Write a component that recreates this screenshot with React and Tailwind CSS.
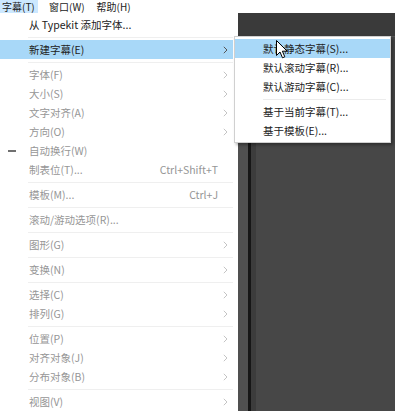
const font = { fontFamily: '"Noto Sans CJK SC", "Noto Sans", sans-serif' };

const items = [
  { label: "从 Typekit 添加字体...", on: true },
  { sep: true },
  { label: "新建字幕(E)", on: true, sub: true, hl: true },
  { sep: true },
  { label: "字体(F)", sub: true },
  { label: "大小(S)", sub: true },
  { label: "文字对齐(A)", sub: true },
  { label: "方向(O)", sub: true },
  { label: "自动换行(W)", dash: true },
  { label: "制表位(T)...", key: "Ctrl+Shift+T" },
  { sep: true },
  { label: "模板(M)...", key: "Ctrl+J" },
  { sep: true },
  { label: "滚动/游动选项(R)..." },
  { sep: true },
  { label: "图形(G)", sub: true },
  { sep: true },
  { label: "变换(N)", sub: true },
  { sep: true },
  { label: "选择(C)", sub: true },
  { label: "排列(G)", sub: true },
  { sep: true },
  { label: "位置(P)", sub: true },
  { label: "对齐对象(J)", sub: true },
  { label: "分布对象(B)", sub: true },
  { sep: true },
  { label: "视图(V)", sub: true },
];

const subItems = [
  { label: "默认静态字幕(S)...", hl: true },
  { label: "默认滚动字幕(R)..." },
  { label: "默认游动字幕(C)..." },
  { sep: true },
  { label: "基于当前字幕(T)..." },
  { label: "基于模板(E)..." },
];

function Chevron({ on }) {
  return (
    <svg width="5" height="8" viewBox="0 0 5 8" className={on ? "text-[#555]" : "text-[#c4c4c4]"}>
      <path d="M0.8 0.8 L4 4 L0.8 7.2" fill="none" stroke="currentColor" strokeWidth="1" />
    </svg>
  );
}

function Sep() {
  return (
    <div className="h-[6px] flex items-center">
      <div className="ml-[28px] mr-[5px] flex-1 h-px bg-[#efefef]"></div>
    </div>
  );
}

function MenuRow({ item }) {
  return (
    <div
      className={
        "relative flex items-center h-[19px] mr-[5px] pl-[29px] text-[10.5px] " +
        (item.hl ? "bg-[#a8d8f8] " : "") +
        (item.on ? "text-[#222]" : "text-[#969696]")
      }
    >
      {item.dash && <div className="absolute left-[8px] top-[9px] w-[8px] h-[2px] bg-[#707070]"></div>}
      <span className="flex-1 whitespace-nowrap">{item.label}</span>
      {item.key && <span className="whitespace-nowrap">{item.key}</span>}
      <div className="w-[15px] flex justify-center">{item.sub && <Chevron on={item.on} />}</div>
    </div>
  );
}

export default function App() {
  return (
    <div className="relative w-[395px] h-[411px] overflow-hidden flex flex-col bg-white" style={font}>
      <div className="h-[13px] flex items-center text-[10px] text-[#222] leading-none">
        <div className="h-full px-[2px] w-[38px] flex items-center bg-[#cce8ff]">字幕(T)</div>
        <div className="ml-[11px]">窗口(W)</div>
        <div className="ml-[12px]">帮助(H)</div>
      </div>
      <div className="flex flex-1 min-h-0">
        <div className="w-[238px] pt-[2px] bg-white">
          {items.map((it, i) => (it.sep ? <Sep key={i} /> : <MenuRow key={i} item={it} />))}
        </div>
        <div className="flex-1 flex flex-col">
          <div className="h-[24px] bg-[#3a3a3a] border-b border-[#555]"></div>
          <div className="flex-1 flex">
            <div className="w-[10px] bg-[#505050]"></div>
            <div className="w-[3px] bg-[#161616]"></div>
            <div className="w-[5px] bg-[#3c3c3c]"></div>
            <div className="flex-1 bg-[#474747]"></div>
          </div>
        </div>
      </div>

      <div className="absolute left-[234px] top-[36px] w-[157px] bg-white border border-[#d0d0d0] py-[2px] shadow-[2px_2px_3px_rgba(0,0,0,0.35)]">
        {subItems.map((it, i) =>
          it.sep ? (
            <div key={i} className="h-[6px] flex items-center">
              <div className="ml-[28px] mr-[4px] flex-1 h-px bg-[#ececec]"></div>
            </div>
          ) : (
            <div
              key={i}
              className={
                "h-[19px] flex items-center pl-[28px] text-[10.5px] text-[#222] whitespace-nowrap " +
                (it.hl ? "bg-[#a8d8f8]" : "")
              }
            >
              {it.label}
            </div>
          )
        )}
      </div>

      <svg className="absolute left-[276px] top-[40px]" width="12" height="19" viewBox="0 0 12 19">
        <path
          d="M0.5 0.5 L0.5 15.5 L4 12 L6.5 17.8 L8.8 16.8 L6.4 11.2 L11.2 11.2 Z"
          fill="#fff"
          stroke="#000"
          strokeWidth="1"
          strokeLinejoin="miter"
        />
      </svg>
    </div>
  );
}
